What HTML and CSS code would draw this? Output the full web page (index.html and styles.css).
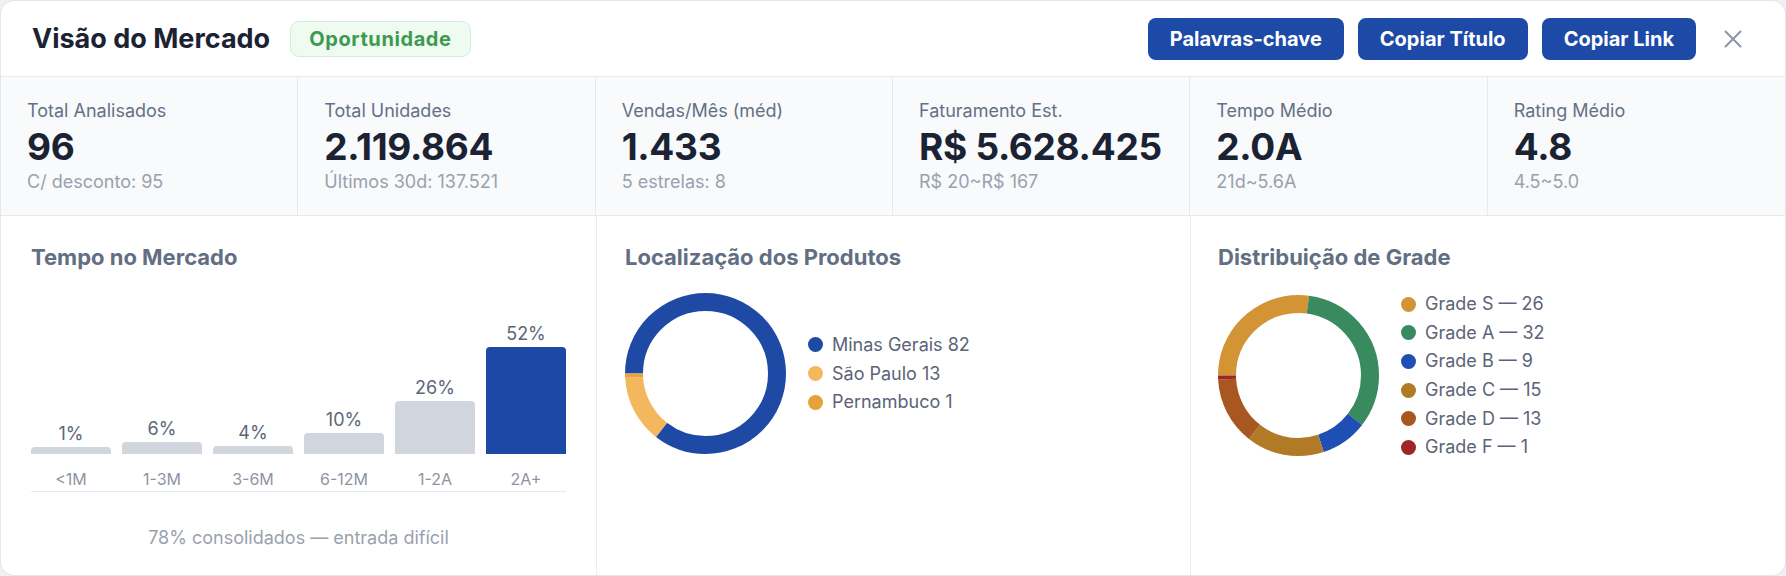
FILE: index.html
```html
<!DOCTYPE html>
<html lang="pt-BR">
<head>
<meta charset="utf-8">
<title>Visão do Mercado</title>
<link rel="stylesheet" href="styles.css">
</head>
<body>
<div class="card">
  <header class="header">
    <h1 class="title">Visão do Mercado</h1>
    <span class="badge">Oportunidade</span>
    <div class="actions">
      <button class="btn">Palavras-chave</button>
      <button class="btn">Copiar Título</button>
      <button class="btn">Copiar Link</button>
    </div>
    <button class="close" aria-label="Fechar">
      <svg width="18" height="18" viewBox="0 0 18 18"><path d="M1.5 1.5 L16.5 16.5 M16.5 1.5 L1.5 16.5" stroke="#8f94a6" stroke-width="2" stroke-linecap="round" fill="none"/></svg>
    </button>
  </header>

  <section class="stats">
    <div class="stat">
      <div class="stat-label">Total Analisados</div>
      <div class="stat-value">96</div>
      <div class="stat-sub">C/ desconto: 95</div>
    </div>
    <div class="stat">
      <div class="stat-label">Total Unidades</div>
      <div class="stat-value">2.119.864</div>
      <div class="stat-sub">Últimos 30d: 137.521</div>
    </div>
    <div class="stat">
      <div class="stat-label">Vendas/Mês (méd)</div>
      <div class="stat-value">1.433</div>
      <div class="stat-sub">5 estrelas: 8</div>
    </div>
    <div class="stat">
      <div class="stat-label">Faturamento Est.</div>
      <div class="stat-value">R$ 5.628.425</div>
      <div class="stat-sub">R$ 20~R$ 167</div>
    </div>
    <div class="stat">
      <div class="stat-label">Tempo Médio</div>
      <div class="stat-value">2.0A</div>
      <div class="stat-sub">21d~5.6A</div>
    </div>
    <div class="stat">
      <div class="stat-label">Rating Médio</div>
      <div class="stat-value">4.8</div>
      <div class="stat-sub">4.5~5.0</div>
    </div>
  </section>

  <section class="charts">
    <div class="panel">
      <h2 class="panel-title">Tempo no Mercado</h2>
      <div class="bars">
        <div class="bar-col"><span class="bar-pct">1%</span><div class="bar" style="height:7px"></div></div>
        <div class="bar-col"><span class="bar-pct">6%</span><div class="bar" style="height:12px"></div></div>
        <div class="bar-col"><span class="bar-pct">4%</span><div class="bar" style="height:8px"></div></div>
        <div class="bar-col"><span class="bar-pct">10%</span><div class="bar" style="height:21px"></div></div>
        <div class="bar-col"><span class="bar-pct">26%</span><div class="bar" style="height:53px"></div></div>
        <div class="bar-col"><span class="bar-pct">52%</span><div class="bar bar-hi" style="height:107px"></div></div>
      </div>
      <div class="bar-labels">
        <span>&lt;1M</span><span>1-3M</span><span>3-6M</span><span>6-12M</span><span>1-2A</span><span>2A+</span>
      </div>
      <p class="bar-note">78% consolidados — entrada difícil</p>
    </div>

    <div class="panel panel-mid">
      <h2 class="panel-title">Localização dos Produtos</h2>
      <div class="donut-row">
        <svg class="donut" width="161" height="161" viewBox="0 0 161 161">
          <g transform="rotate(180 80.5 80.5)" fill="none" stroke-width="18">
            <circle cx="80.5" cy="80.5" r="71.5" stroke="#1e4aa6" stroke-dasharray="383.73 1000" stroke-dashoffset="0"/>
            <circle cx="80.5" cy="80.5" r="71.5" stroke="#f3b85e" stroke-dasharray="60.84 1000" stroke-dashoffset="-383.73"/>
            <circle cx="80.5" cy="80.5" r="71.5" stroke="#e5a23a" stroke-dasharray="4.68 1000" stroke-dashoffset="-444.57"/>
          </g>
        </svg>
        <ul class="legend">
          <li><span class="dot dot-mg"></span>Minas Gerais 82</li>
          <li><span class="dot dot-sp"></span>São Paulo 13</li>
          <li><span class="dot dot-pe"></span>Pernambuco 1</li>
        </ul>
      </div>
    </div>

    <div class="panel panel-last">
      <h2 class="panel-title">Distribuição de Grade</h2>
      <div class="donut-row">
        <svg class="donut" width="161" height="161" viewBox="0 0 161 161">
          <g transform="rotate(180 80.5 80.5)" fill="none" stroke-width="18">
            <circle cx="80.5" cy="80.5" r="71.5" stroke="#d29434" stroke-dasharray="121.67 1000" stroke-dashoffset="0"/>
            <circle cx="80.5" cy="80.5" r="71.5" stroke="#3a8a60" stroke-dasharray="149.75 1000" stroke-dashoffset="-121.67"/>
            <circle cx="80.5" cy="80.5" r="71.5" stroke="#1f4fb5" stroke-dasharray="42.12 1000" stroke-dashoffset="-271.42"/>
            <circle cx="80.5" cy="80.5" r="71.5" stroke="#b07a26" stroke-dasharray="70.2 1000" stroke-dashoffset="-313.54"/>
            <circle cx="80.5" cy="80.5" r="71.5" stroke="#a95721" stroke-dasharray="60.84 1000" stroke-dashoffset="-383.74"/>
            <circle cx="80.5" cy="80.5" r="71.5" stroke="#a02626" stroke-dasharray="4.68 1000" stroke-dashoffset="-444.58"/>
          </g>
        </svg>
        <ul class="legend">
          <li><span class="dot dot-s"></span>Grade S — 26</li>
          <li><span class="dot dot-a"></span>Grade A — 32</li>
          <li><span class="dot dot-b"></span>Grade B — 9</li>
          <li><span class="dot dot-c"></span>Grade C — 15</li>
          <li><span class="dot dot-d"></span>Grade D — 13</li>
          <li><span class="dot dot-f"></span>Grade F — 1</li>
        </ul>
      </div>
    </div>
  </section>
</div>
</body>
</html>
```

FILE: styles.css
```css
* { box-sizing: border-box; }

html, body {
  margin: 0;
  padding: 0;
  background: #eef0f3;
}

body {
  font-family: Inter, "Noto Sans", "Liberation Sans", sans-serif;
  color: #1b2233;
}

.card {
  width: 1786px;
  height: 576px;
  background: #ffffff;
  border: 1px solid #e3e6ea;
  border-radius: 14px;
  overflow: hidden;
  display: flex;
  flex-direction: column;
}

/* Header */
.header {
  height: 76px;
  flex: none;
  display: flex;
  align-items: center;
  padding: 0 42px 0 31px;
  border-bottom: 1px solid #e8ebef;
}

.title {
  margin: 0;
  font-size: 27px;
  font-weight: 700;
  line-height: 1;
  color: #1b2233;
}

.badge {
  margin-left: 20px;
  height: 36px;
  display: inline-flex;
  align-items: center;
  padding: 0 18px;
  border: 1px solid #d3ecd9;
  background: #effaf1;
  color: #3d9a51;
  font-size: 20px;
  font-weight: 700;
  border-radius: 9px;
  letter-spacing: 0.6px;
}

.actions {
  margin-left: auto;
  display: flex;
  gap: 14px;
}

.btn {
  height: 42px;
  padding: 0 22px;
  border: none;
  border-radius: 8px;
  background: #1d4aa7;
  color: #ffffff;
  font-family: inherit;
  font-size: 20px;
  font-weight: 700;
  cursor: pointer;
}

.close {
  margin-left: 27px;
  width: 20px;
  height: 20px;
  padding: 0;
  border: none;
  background: none;
  display: flex;
  align-items: center;
  justify-content: center;
}

/* Stats */
.stats {
  flex: none;
  height: 139px;
  display: grid;
  grid-template-columns: repeat(6, 1fr);
  background: #f8fafc;
  border-bottom: 1px solid #e6e9ed;
}

.stat {
  padding: 23px 26px 0;
  border-right: 1px solid #e6e9ed;
}
.stat:last-child { border-right: none; }

.stat-label {
  font-size: 18px;
  line-height: 22px;
  color: #667085;
}

.stat-value {
  margin-top: 3px;
  font-size: 37px;
  line-height: 44px;
  font-weight: 700;
  color: #1b2233;
  letter-spacing: -0.3px;
}

.stat-sub {
  margin-top: 2px;
  font-size: 18px;
  line-height: 22px;
  color: #9aa1ae;
}

/* Charts */
.charts {
  flex: 1;
  display: grid;
  grid-template-columns: repeat(3, 1fr);
}

.panel {
  padding: 28px 30px 0;
  border-right: 1px solid #eceef1;
}
.panel-mid { padding-left: 28px; }
.panel-last { border-right: none; padding-left: 27px; }

.panel-title {
  margin: 0;
  font-size: 22px;
  line-height: 26px;
  font-weight: 700;
  color: #626e82;
}

.bars {
  margin-top: 24px;
  height: 160px;
  width: 535px;
  display: flex;
  align-items: flex-end;
  gap: 11px;
}

.bar-col {
  flex: 1;
  display: flex;
  flex-direction: column;
  align-items: stretch;
}

.bar-pct {
  text-align: center;
  font-size: 18px;
  line-height: 22px;
  margin-bottom: 2px;
  color: #5d6679;
}

.bar {
  background: #d0d5de;
  border-radius: 4px 4px 0 0;
}
.bar-hi { background: #1e48a5; }

.bar-labels {
  width: 535px;
  margin-top: 16px;
  padding-bottom: 3px;
  display: flex;
  gap: 11px;
  border-bottom: 1px solid #e6e9ed;
}
.bar-labels span {
  flex: 1;
  text-align: center;
  font-size: 16px;
  line-height: 18px;
  color: #8d95a3;
}

.bar-note {
  width: 535px;
  margin: 35px 0 0;
  text-align: center;
  font-size: 18px;
  line-height: 22px;
  color: #9aa1ad;
}

.donut-row {
  margin-top: 23px;
  display: flex;
  align-items: center;
  gap: 22px;
}

.donut { flex: none; display: block; }

.legend {
  list-style: none;
  margin: 0;
  padding: 0;
  display: flex;
  flex-direction: column;
  gap: 6.7px;
}

.legend li {
  display: flex;
  align-items: center;
  font-size: 18px;
  line-height: 22px;
  color: #5b6477;
}

.dot {
  width: 15px;
  height: 15px;
  border-radius: 50%;
  margin-right: 9px;
  flex: none;
}
.dot-mg { background: #1e4aa6; }
.dot-sp { background: #f3b85e; }
.dot-pe { background: #e5a23a; }
.dot-s { background: #d29434; }
.dot-a { background: #3a8a60; }
.dot-b { background: #1f4fb5; }
.dot-c { background: #b07a26; }
.dot-d { background: #a95721; }
.dot-f { background: #a02626; }
```
